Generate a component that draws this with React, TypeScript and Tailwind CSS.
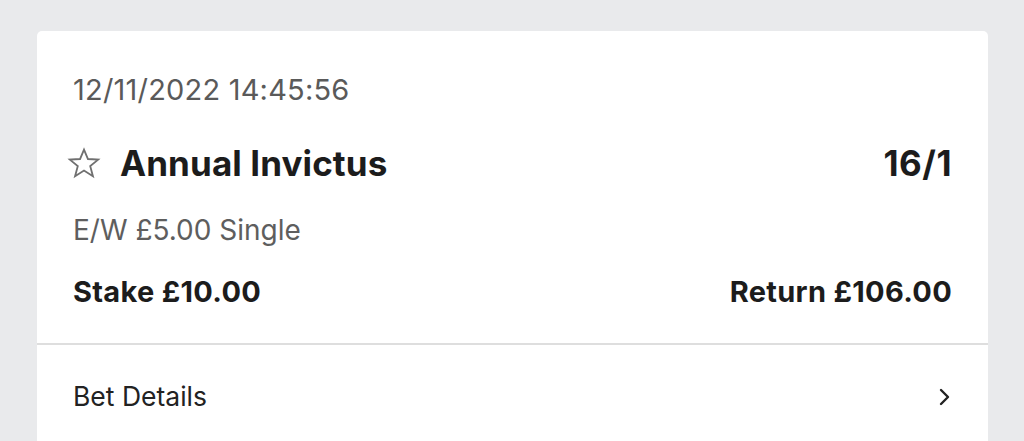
import { FC } from "react";

const Star: FC = () => (
  <svg width="36" height="34" viewBox="0 0 24 24" fill="none" stroke="#707070" strokeWidth="1.3" strokeLinejoin="miter">
    <polygon points="12,2.5 14.8,9.2 22,9.6 16.4,14.2 18.3,21.3 12,17.3 5.7,21.3 7.6,14.2 2,9.6 9.2,9.2" />
  </svg>
);

const Chevron: FC = () => (
  <svg width="14" height="20" viewBox="0 0 14 20" fill="none" stroke="#222" strokeWidth="2.4" strokeLinecap="round" strokeLinejoin="round">
    <polyline points="3,3 10,10 3,17" />
  </svg>
);

export default function App() {
  return (
    <div
      className="w-[1024px] h-[441px] overflow-hidden bg-[#e9eaec] pt-[31px] px-[37px]"
      style={{ fontFamily: "Inter, 'Noto Sans', sans-serif" }}
    >
      <div className="w-[951px] h-[500px] bg-white rounded-[5px] flex flex-col">
        <div className="px-9 pt-[40px] h-[314px] border-b-2 border-[#dedede]">
          <div className="text-[29px] leading-[38px] text-[#5a5a5a] tracking-[0.2px]">12/11/2022 14:45:56</div>
          <div className="mt-[33px] flex items-center justify-between">
            <div className="flex items-center -ml-[7px]">
              <Star />
              <span className="ml-[18px] text-[35px] leading-[42px] font-bold text-[#1c1c1c] tracking-[0.1px]">Annual Invictus</span>
            </div>
            <span className="text-[35px] leading-[42px] font-bold text-[#1c1c1c] tracking-[0.5px]">16/1</span>
          </div>
          <div className="mt-[28px] text-[28px] leading-[36px] text-[#5e5e5e]">E/W £5.00 Single</div>
          <div className="mt-[26px] flex items-center justify-between text-[29px] leading-[36px] font-bold text-[#1c1c1c] tracking-[0.3px]">
            <span>Stake £10.00</span>
            <span>Return £106.00</span>
          </div>
        </div>
        <div className="px-9 h-[104px] flex items-center justify-between">
          <span className="text-[26.5px] text-[#222]">Bet Details</span>
          <Chevron />
        </div>
      </div>
    </div>
  );
}
